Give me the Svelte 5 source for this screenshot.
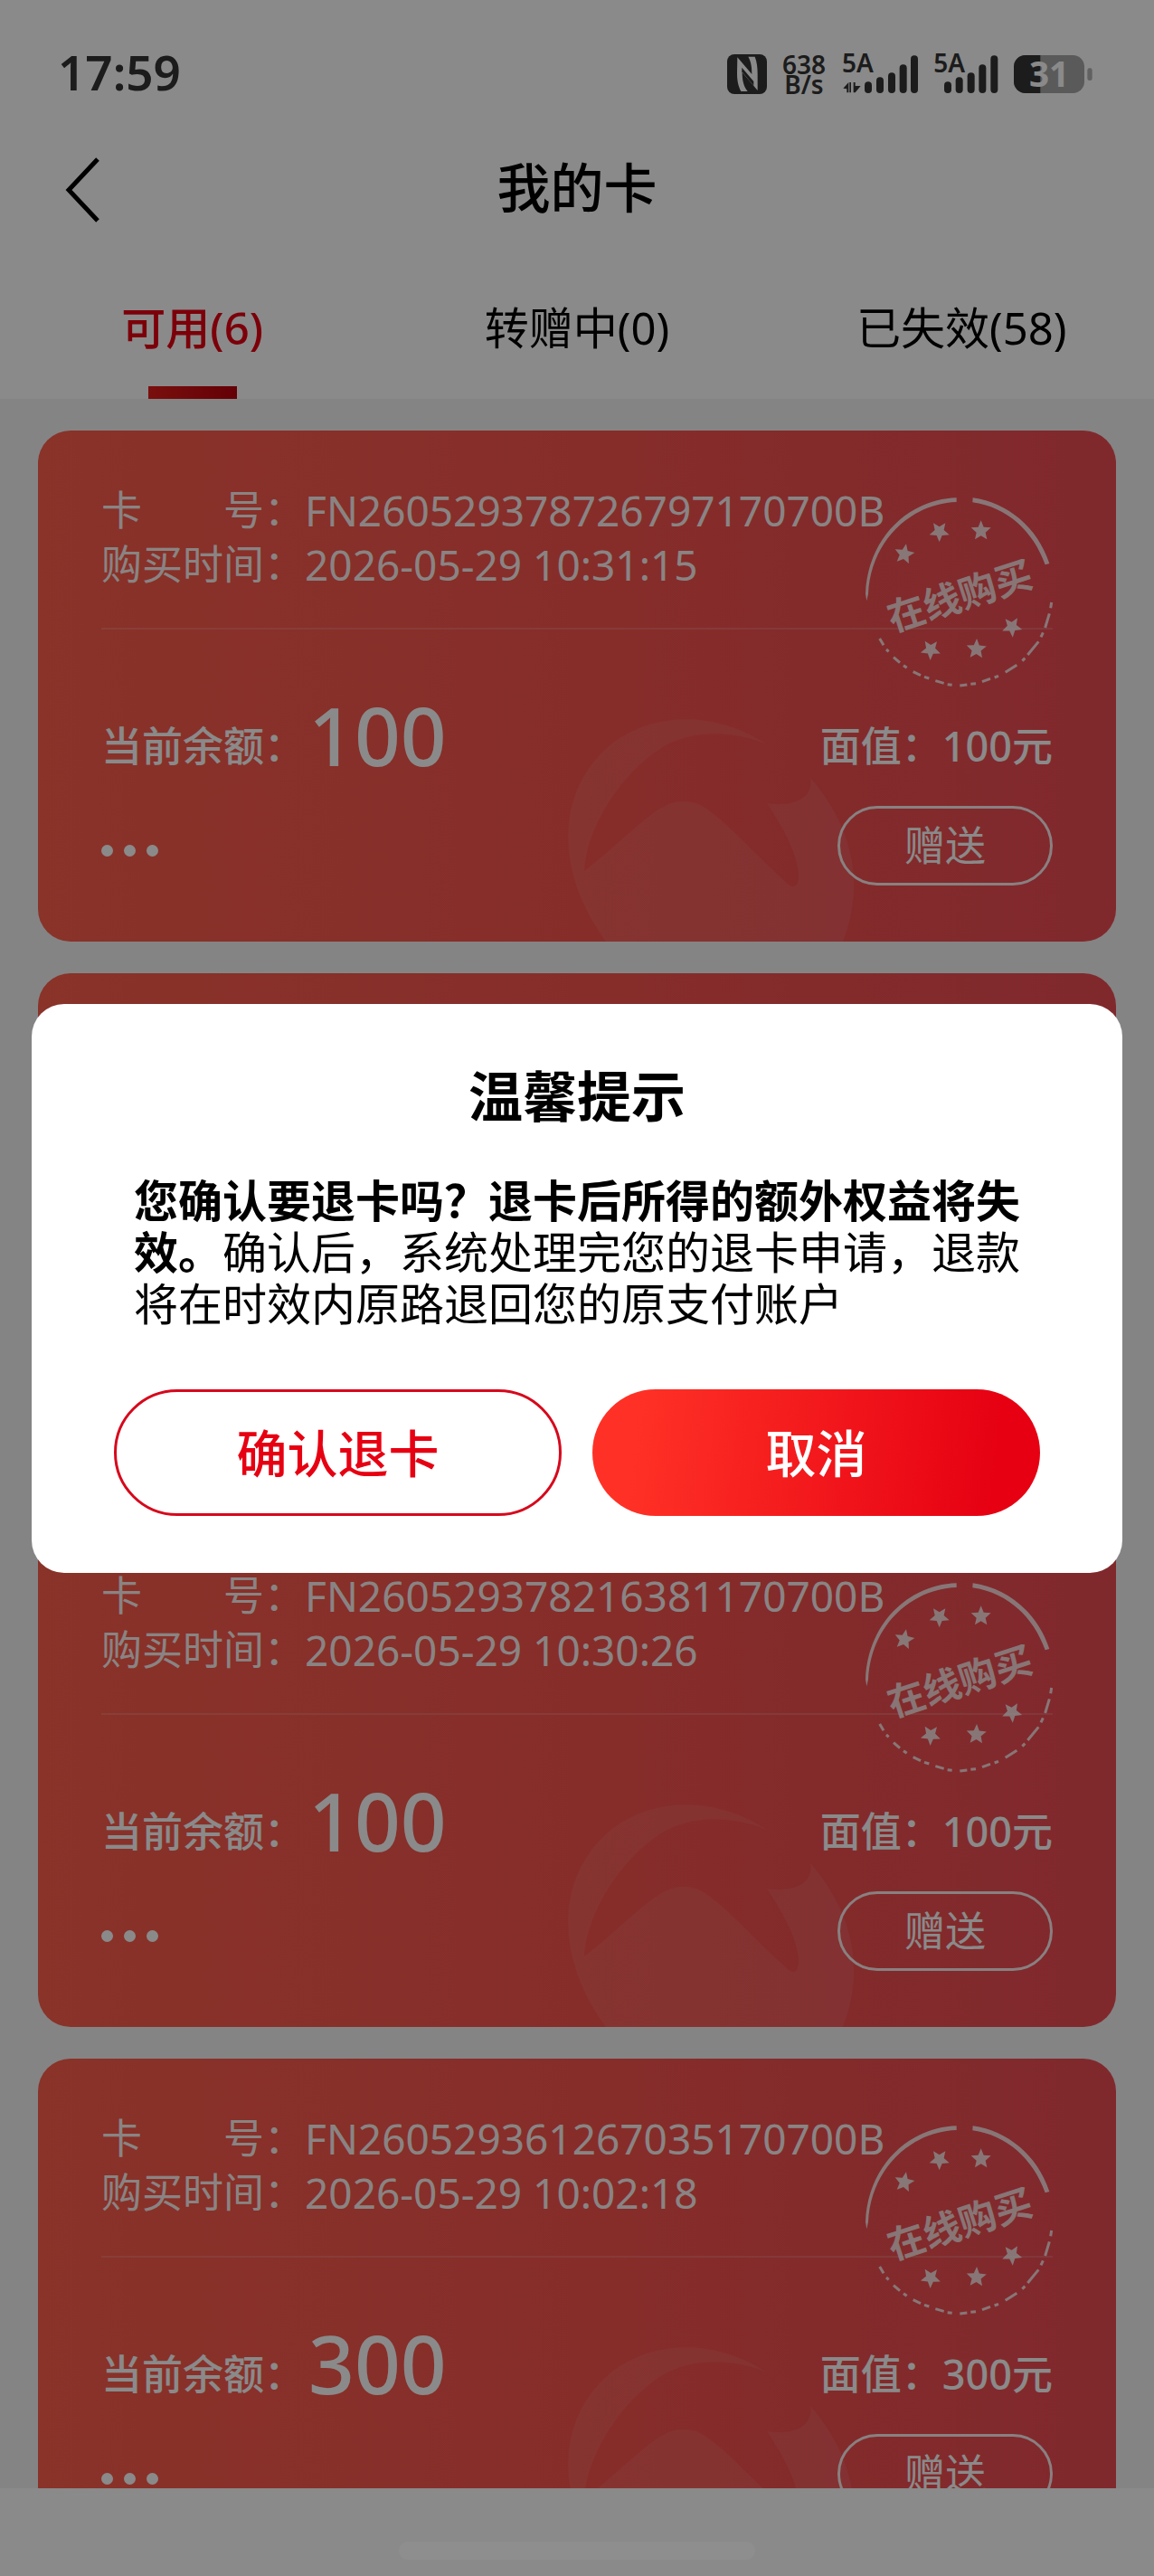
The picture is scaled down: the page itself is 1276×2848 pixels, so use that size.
<script lang="ts">
  // "My cards" screen with the refund confirmation dialog open on
  // top of it. The scrim dims everything below, status bar included,
  // so the colours here are the undimmed ones.

  type Card = {
    no: string;
    boughtAt: string;
    balance: number;
    faceValue: number;
  };

  const cards: Card[] = [
    { no: "FN260529378726797170700B", boughtAt: "2026-05-29 10:31:15", balance: 100, faceValue: 100 },
    { no: "FN260529378452913170700B", boughtAt: "2026-05-29 10:30:51", balance: 100, faceValue: 100 },
    { no: "FN260529378216381170700B", boughtAt: "2026-05-29 10:30:26", balance: 100, faceValue: 100 },
    { no: "FN260529361267035170700B", boughtAt: "2026-05-29 10:02:18", balance: 300, faceValue: 300 },
  ];

  const tabs = [
    { id: "usable", label: "可用", count: 6 },
    { id: "gifting", label: "转赠中", count: 0 },
    { id: "expired", label: "已失效", count: 58 },
  ];

  // x, y and rotation of each star inside the stamp
  const stars = [
    [209, 247, 10],
    [325, 174, 180],
    [463, 170, 0],
    [566, 490, 176],
    [448, 562, 2],
    [296, 566, 182],
  ];

  let activeTab = $state("usable");
  let confirming = $state(true);
</script>

<div class="screen" lang="zh-CN">
  <header class="top">
    <div class="status">
      <span class="clock">17:59</span>
      <div class="indicators">
        <svg width="44" height="44" viewBox="0 0 132 132" aria-hidden="true">
          <rect width="132" height="132" rx="24" fill="#343434" />
          <path
            d="M34 10 L82 66 C82 44 80 26 70 8 L92 8 C99 26 101 44 101 66 L101 120 L50 60 C50 84 54 106 68 123 L46 123 C36 104 33 86 33 62 Z"
            fill="#fff"
          />
          <path d="M49 44 L49 58 L88 104 L88 90 Z" fill="#343434" />
        </svg>
        <span class="speed">638<br />B/s</span>
        <svg width="85" height="46" viewBox="450 86 255 138" aria-hidden="true">
          <text class="net" x="453" y="150">5A</text>
          <path d="M457 202 L475 182 L475 216 L469 216 L469 204 Z M478 182 L483 182 L483 216 L478 216 Z" fill="#343434" />
          <path d="M491 182 L497 182 L497 194 L515 194 L497 216 L491 216 Z" fill="#343434" />
          <g class="bars">
            <path d="M540 192 V206" />
            <path d="M579 177 V206" />
            <path d="M618 162 V206" />
            <path d="M656 135 V206" />
            <path d="M693 105 V206" />
          </g>
        </svg>
        <svg width="72" height="46" viewBox="754 86 216 138" aria-hidden="true">
          <text class="net" x="755" y="150">5A</text>
          <g class="bars">
            <path d="M802 192 V206" />
            <path d="M840 177 V206" />
            <path d="M879 162 V206" />
            <path d="M917 135 V206" />
            <path d="M956 105 V206" />
          </g>
        </svg>
        <svg width="87" height="42" viewBox="1022 92 261 126" aria-label="31%">
          <rect x="1022" y="92" width="234" height="126" rx="38" fill="#a6a6a6" />
          <path d="M1060 92 H1110 V218 H1060 A38 38 0 0 1 1022 180 V130 A38 38 0 0 1 1060 92 Z" fill="#343434" />
          <rect x="1266" y="135" width="16" height="41" rx="7" fill="#b4b4b4" />
          <text class="charge" x="1139" y="197">31</text>
        </svg>
      </div>
    </div>

    <div class="nav">
      <button class="back" type="button" aria-label="返回">
        <svg width="42" height="74" viewBox="0 0 42 74" aria-hidden="true">
          <path d="M38 3 L6 37 L38 71" fill="none" stroke="#000" stroke-width="5" />
        </svg>
      </button>
      <h1>我的卡</h1>
    </div>

    <nav class="tabs">
      {#each tabs as tab (tab.id)}
        <button
          class="tab"
          class:active={activeTab === tab.id}
          type="button"
          onclick={() => (activeTab = tab.id)}
        >
          {tab.label}({tab.count})
        </button>
      {/each}
    </nav>
  </header>

  <main class="list">
    {#each cards as card (card.no)}
      <article class="card">
        <svg class="watermark" width="320" height="250" viewBox="585 315 320 250" aria-hidden="true">
          <path
            d="M628 565 C570 486 572 396 636 345 C690 305 760 316 806 347 C768 331 724 331 692 349 C642 380 606 442 604 487 C640 460 676 420 700 412 Q713 408 728 412 C752 422 786 462 830 502 Q842 510 841 489 C838 464 824 440 806 412 C834 416 858 408 854 384 C894 430 918 492 890 565 Z"
            fill="#fff"
            fill-opacity="0.07"
          />
        </svg>

        <div class="line"><span class="key">卡　　号：</span><span class="val">{card.no}</span></div>
        <div class="line"><span class="key">购买时间：</span><span class="val">{card.boughtAt}</span></div>

        <div class="money">
          <span class="key">当前余额：</span>
          <span class="balance">{card.balance}</span>
          <span class="face">面值：<span class="val">{card.faceValue}</span>元</span>
        </div>

        <div class="foot">
          <button class="more" type="button" aria-label="更多">
            <i></i><i></i><i></i>
          </button>
          <button class="gift" type="button">赠送</button>
        </div>

        <svg class="stamp" width="208" height="210" viewBox="80 60 624 630">
          <path
            d="M382 61 C226 66 88 190 80 380 L84 403 L89 380 C98 200 232 80 382 75 Z"
          />
          <path d="M436 61 C552 78 650 158 690 279 L676 283 C636 170 548 92 435 76 Z" />
          <path
            class="dashes"
            d="M697 408 L694 427 M690 445 L676 492 M669 508 L662 523 M654 538 L618 582 M609 593 L600 602 M582 616 L544 640 M521 652 L508 657 M494 661 L467 671 M446 677 L429 679 M417 681 L393 684 M367 682 L352 680 M340 676 L312 668 M291 660 L275 655 M263 650 L238 638 M217 625 L206 617 M194 608 L173 590 M157 571 L149 564 M140 550 L127 528"
          />
          {#each stars as [x, y, turn]}
            <path
              transform="translate({x} {y}) rotate({turn})"
              d="M0 -34 L9 -12 L33 -10 L15 6 L20 29 L0 17 L-20 29 L-15 6 L-33 -10 L-9 -12 Z"
            />
          {/each}
          <text transform="translate(393 388) rotate(-18)" y="44">在线购买</text>
        </svg>
      </article>
    {/each}
  </main>

  <footer class="bottom"></footer>
</div>

{#if confirming}
  <div class="scrim" lang="zh-CN">
    <div class="dialog" role="dialog" aria-modal="true" aria-labelledby="dialog-title">
      <h2 id="dialog-title">温馨提示</h2>
      <p><b>您确认要退卡吗？退卡后所得的额外权益将失效。</b>确认后，系统处理完您的退卡申请，退款将在时效内原路退回您的原支付账户</p>
      <div class="actions">
        <button class="confirm" type="button" onclick={() => (confirming = false)}>确认退卡</button>
        <button class="cancel" type="button" onclick={() => (confirming = false)}>取消</button>
      </div>
    </div>
    <div class="home"></div>
  </div>
{/if}

<style>
  :global(body) {
    font-family: "Noto Sans", "Noto Sans CJK SC", sans-serif;
    color: #000;
  }
  button {
    margin: 0;
    padding: 0;
    border: 0;
    background: none;
    color: inherit;
    font: inherit;
    cursor: pointer;
  }
  svg { display: block; }

  .screen {
    display: flex;
    flex-direction: column;
    height: 100vh;
    overflow: hidden;
    background: #f4f4f4;
  }
  .top {
    flex: none;
    background: #fff;
  }

  /* status bar */
  .status {
    display: flex;
    align-items: center;
    justify-content: space-between;
    height: 84px;
    padding: 40px 68px 0 64px;
    color: #343434;
  }
  .clock {
    padding-bottom: 4px;
    font-size: 53px;
    line-height: 60px;
    font-weight: 600;
  }
  .indicators {
    display: flex;
    align-items: center;
    gap: 17px;
  }
  .indicators svg { overflow: visible; }
  .speed {
    font-size: 28px;
    line-height: 22px;
    font-weight: 600;
    text-align: center;
  }
  .net {
    font-size: 84px;
    font-weight: 600;
    fill: #343434;
  }
  .bars {
    stroke: #343434;
    stroke-width: 24px;
    stroke-linecap: round;
  }
  .charge {
    font-size: 116px;
    font-weight: 700;
    text-anchor: middle;
    fill: #fff;
  }

  /* title bar: equal side columns keep the title centred */
  .nav {
    display: grid;
    grid-template-columns: 1fr auto 1fr;
    align-items: center;
    height: 172px;
    padding: 0 70px;
  }
  .back { justify-self: start; }
  h1 {
    margin: 0;
    padding-bottom: 6px;
    font-size: 59px;
    line-height: 80px;
    font-weight: 500;
  }

  .tabs {
    display: grid;
    grid-template-columns: repeat(3, 1fr);
    height: 145px;
  }
  .tab {
    display: flex;
    flex-direction: column;
    align-items: center;
    padding-top: 36px;
    font-size: 49px;
    line-height: 60px;
  }
  .tab.active {
    color: #e60012;
    font-weight: 500;
  }
  .tab.active::after {
    content: "";
    width: 98px;
    height: 14px;
    margin-top: auto;
    background: linear-gradient(90deg, #e11e1a, #b8000c);
  }

  /* card list */
  .list {
    flex: 1;
    min-height: 0;
    overflow: hidden;
    display: flex;
    flex-direction: column;
    gap: 35px;
    padding: 35px 42px 0;
  }
  .card {
    position: relative;
    flex: none;
    box-sizing: border-box;
    height: 565px;
    padding: 58px 70px 62px;
    overflow: hidden;
    display: flex;
    flex-direction: column;
    border-radius: 36px;
    background: linear-gradient(90deg, #fd5e4d, #f8544e 50%, #ec4c54);
    color: #fff;
    font-size: 45px;
    line-height: 60px;
  }
  .watermark {
    position: absolute;
    left: 585px;
    bottom: 0;
  }
  .line {
    display: flex;
    color: rgba(255, 255, 255, 0.95);
  }
  .line .val {
    font-size: 46px;
  }
  .money {
    display: flex;
    align-items: flex-end;
    margin-top: 40px;
    padding-top: 75px;
    border-top: 2px solid rgba(255, 255, 255, 0.15);
    font-weight: 500;
  }
  .balance {
    padding-left: 4px;
    font-size: 89px;
    line-height: 84px;
  }
  .face { margin-left: auto; }
  .foot {
    display: flex;
    align-items: center;
    justify-content: space-between;
    margin-top: auto;
  }
  .more {
    display: flex;
    gap: 12px;
    padding: 22px 0 12px;
  }
  .more i {
    width: 13px;
    height: 13px;
    border-radius: 50%;
    background: #fff;
  }
  .gift {
    box-sizing: border-box;
    width: 238px;
    height: 88px;
    border: 3px solid rgba(255, 255, 255, 0.9);
    border-radius: 44px;
    line-height: 80px;
  }
  .stamp {
    position: absolute;
    top: 74px;
    right: 69px;
    fill: rgba(255, 255, 255, 0.8);
  }
  .stamp text {
    font-size: 124px;
    font-weight: 700;
    text-anchor: middle;
  }
  .dashes {
    fill: none;
    stroke: rgba(255, 255, 255, 0.8);
    stroke-width: 9px;
  }

  .bottom {
    flex: none;
    height: 97px;
    background: #fff;
  }

  /* dialog */
  .scrim {
    position: fixed;
    inset: 0;
    display: flex;
    align-items: center;
    padding: 0 35px;
    background: rgba(0, 0, 0, 0.46);
  }
  .dialog {
    flex: 1;
    padding: 60px 91px 63px;
    border-radius: 36px;
    background: #fff;
  }
  h2 {
    margin: 0;
    font-size: 60px;
    line-height: 84px;
    font-weight: 700;
    text-align: center;
  }
  p {
    margin: 45px 0 66px 22px;
    font-size: 49px;
    line-height: 57px;
  }
  .actions {
    display: grid;
    grid-template-columns: 1fr 1fr;
    gap: 34px;
  }
  .actions button {
    height: 140px;
    border-radius: 70px;
    font-size: 56px;
    line-height: 80px;
    font-weight: 500;
  }
  .confirm {
    border: 3px solid #d7081c;
    color: #e60012;
  }
  .cancel {
    background: linear-gradient(97deg, #ff3126 10%, #e60012 90%);
    color: #fff;
  }
  .home {
    position: absolute;
    left: 50%;
    bottom: 18px;
    width: 394px;
    height: 20px;
    margin-left: -197px;
    border-radius: 10px;
    background: rgba(255, 255, 255, 0.03);
  }
</style>
